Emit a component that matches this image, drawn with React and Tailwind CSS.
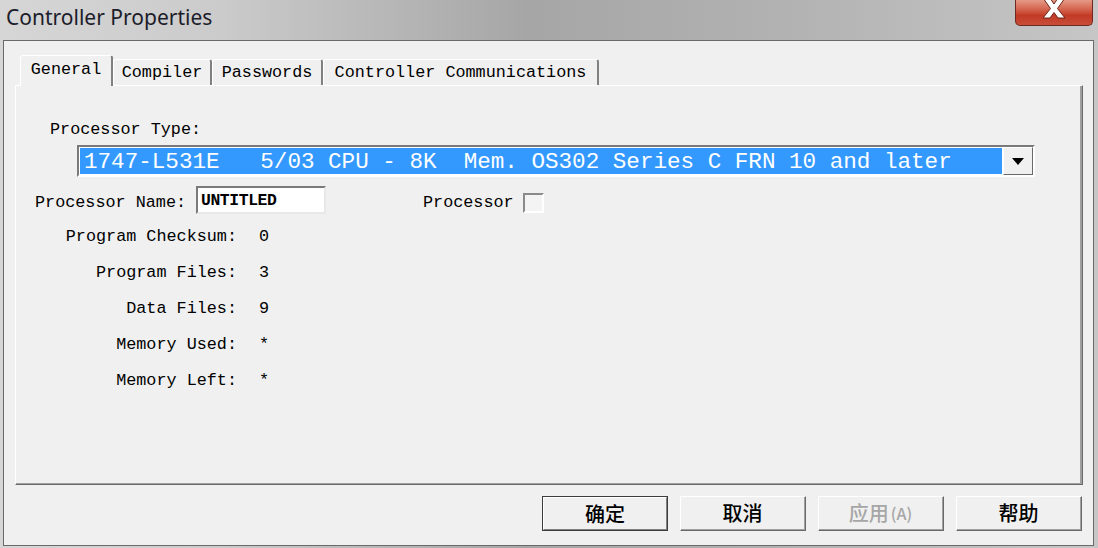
const mono = { fontFamily: '"Liberation Mono", "DejaVu Sans Mono", monospace' };

const tabs = [
  { label: "General", w: "w-[93px]", active: true },
  { label: "Compiler", w: "w-[99px]" },
  { label: "Passwords", w: "w-[111px]" },
  { label: "Controller Communications", w: "w-[276px]" },
];

const stats = [
  ["Program Checksum:", "0"],
  ["Program Files:", "3"],
  ["Data Files:", "9"],
  ["Memory Used:", "*"],
  ["Memory Left:", "*"],
];

const Tab = ({ label, w, active }) => (
  <div
    className={`${w} flex items-center justify-center border-t border-l border-white border-r-2 border-r-[#808080] rounded-t-[3px] bg-[#f0f0f0] text-[16.8px] text-black ${
      active ? "h-[31px] relative z-10 pb-[3px]" : "h-[27px] mt-[4px]"
    }`}
  >
    {label}
  </div>
);

const Button = ({ children, isDefault, disabled }) => (
  <button
    className={`w-[126px] h-[35px] flex items-center justify-center bg-[#f0f0f0] text-[20px] font-medium ${
      isDefault
        ? "border border-[#3c3c3c]"
        : "border border-t-white border-l-white border-b-[#696969] border-r-[#696969]"
    } ${disabled ? "text-[#a6a6a6]" : "text-black"}`}
    style={{ fontFamily: '"Noto Sans CJK SC", "Noto Sans", sans-serif' }}
  >
    <span
      className={`w-full h-full flex items-center justify-center ${
        isDefault
          ? "border border-t-white border-l-white border-b-[#808080] border-r-[#808080]"
          : "border-b border-r border-[#a0a0a0]"
      }`}
    >
      {children}
    </span>
  </button>
);

export default function App() {
  return (
    <div className="w-[1098px] h-[548px] overflow-hidden flex flex-col bg-[linear-gradient(90deg,#d6d6d6_0%,#cbcbcb_20%,#a6a6a6_48%,#b1b1b1_70%,#c6c6c6_100%)]">
      {/* title bar */}
      <div className="h-[40px] flex items-start justify-between">
        <div
          className="pl-[6px] pt-[2px] text-[21px] text-[#1c1c2a]"
          style={{ fontFamily: '"Noto Sans", "Open Sans", sans-serif' }}
        >
          Controller Properties
        </div>
        <div className="mr-[5px] w-[78px] h-[26px] rounded-b-[5px] border border-t-0 border-[#6e2a22] bg-[linear-gradient(180deg,#e49a86_0%,#d2604a_40%,#c23a26_62%,#c84e38_100%)] flex items-start justify-center">
          <svg width="28" height="19" viewBox="0 0 28 19">
            <path
              d="M3 -2 L10 -2 L14 4 L18 -2 L25 -2 L17.5 8.5 L25 18 L18 18 L14 12.5 L10 18 L3 18 L10.5 8.5 Z"
              fill="#ffffff"
              stroke="#6a2418"
              strokeWidth="1"
            />
          </svg>
        </div>
      </div>

      {/* dialog body */}
      <div
        className="ml-[3px] mr-[4px] h-[506px] border border-[#6a6a6a] bg-[#f0f0f0] pl-[11px] pr-[10px] pt-[14px] flex flex-col"
        style={mono}
      >
        <div className="flex items-start ml-[5px] -mb-px">
          {tabs.map((t) => (
            <Tab key={t.label} {...t} />
          ))}
        </div>

        {/* tab panel */}
        <div className="h-[400px] border-t border-l border-white border-r border-b border-r-[#696969] border-b-[#696969] bg-[#f0f0f0]">
          <div className="h-full border-r-2 border-b border-r-[#a0a0a0] border-b-[#a0a0a0] pt-[34px] flex flex-col text-[16.8px] text-black">
            <div className="pl-[34px] h-[20px] leading-[20px]">Processor Type:</div>

            <div className="mt-[5px] ml-[61px] w-[958px] h-[32px] border-2 border-t-[#7a7a7a] border-l-[#7a7a7a] border-b-white border-r-white flex bg-white">
              <div className="flex-1 m-[1px] bg-[#3399ff] text-white text-[22.6px] leading-[24px] pt-[2px] pl-[4px] whitespace-pre">
                {"1747-L531E   5/03 CPU - 8K  Mem. OS302 Series C FRN 10 and later"}
              </div>
              <div className="w-[30px] border border-t-white border-l-white border-b-[#696969] border-r-[#696969] bg-[#f0f0f0] flex items-center justify-center">
                <svg width="12" height="7" viewBox="0 0 12 7">
                  <path d="M0 0 H12 L6 7 Z" fill="#000" />
                </svg>
              </div>
            </div>

            <div className="mt-[9px] ml-[19px] flex items-start h-[28px]">
              <div className="w-[161px] whitespace-pre leading-[28px] pt-[3px]">Processor Name:</div>
              <div className="w-[130px] h-[28px] bg-white border-2 border-t-[#7a7a7a] border-l-[#7a7a7a] border-b-[#e8e8e8] border-r-[#e8e8e8] pl-[3px] leading-[26px] text-[16.4px] font-semibold tracking-[-0.4px]">
                UNTITLED
              </div>
              <div className="ml-[97px] whitespace-pre leading-[28px] pt-[3px]">Processor</div>
              <div className="ml-[9px] mt-[7px] w-[21px] h-[20px] border-2 border-t-[#8a8a8a] border-l-[#8a8a8a] border-b-white border-r-white bg-[#f4f4f4]" />
            </div>

            <div className="mt-[5px] ml-[19px] grid grid-cols-[202px_auto] gap-x-[22px]">
              {stats.map(([k, v]) => (
                <div key={k} className="contents">
                  <div className="h-[36px] flex items-center justify-end whitespace-pre">{k}</div>
                  <div className="h-[36px] flex items-center">{v}</div>
                </div>
              ))}
            </div>
          </div>
        </div>

        {/* buttons */}
        <div className="mt-[11px] flex justify-end gap-[12px] pr-[1px]">
          <Button isDefault>确定</Button>
          <Button>取消</Button>
          <Button disabled>
            应用<span className="text-[16px] ml-[2px]">(A)</span>
          </Button>
          <Button>帮助</Button>
        </div>
      </div>
    </div>
  );
}
